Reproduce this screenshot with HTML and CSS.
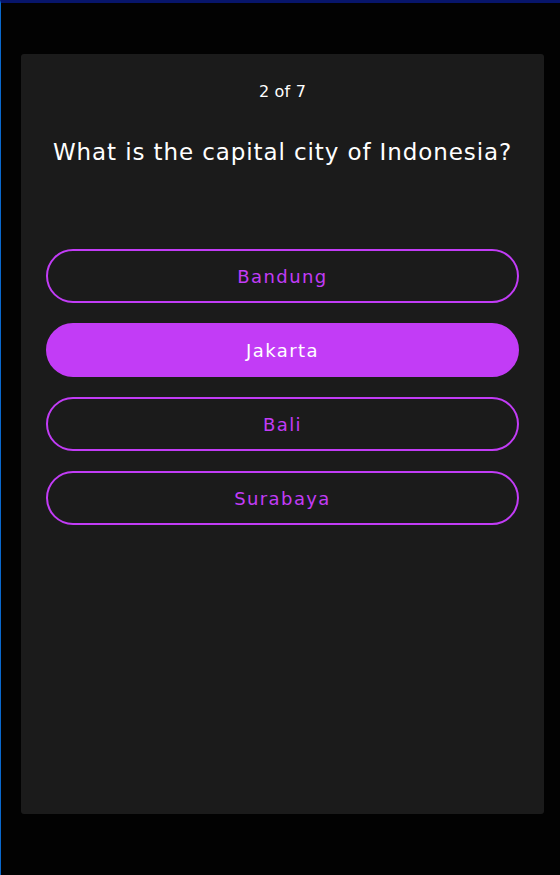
FILE: index.html
```html
<!DOCTYPE html>
<html>
<head>
<meta charset="utf-8">
<link rel="stylesheet" href="styles.css">
</head>
<body>
<div class="frame">
  <div class="card">
    <div class="counter">2 of 7</div>
    <h1 class="question">What is the capital city of Indonesia?</h1>
    <div class="answers">
      <button class="answer">Bandung</button>
      <button class="answer selected">Jakarta</button>
      <button class="answer">Bali</button>
      <button class="answer">Surabaya</button>
    </div>
  </div>
</div>
</body>
</html>
```
FILE: styles.css
```css
html, body {
  margin: 0;
  padding: 0;
  background: #020202;
  height: 100%;
}
body {
  font-family: "DejaVu Sans", "Open Sans", sans-serif;
  border-top: 3px solid #07156a;
  border-left: 1px solid #0a68cc;
  box-sizing: border-box;
}
.frame {
  padding: 51px 0 0 20px;
}
.card {
  width: 523px;
  height: 760px;
  box-sizing: border-box;
  background: #1b1b1b;
  border-radius: 3px;
  padding: 26px 25px 0 25px;
}
.counter {
  color: #ffffff;
  text-align: center;
  font-size: 16px;
  line-height: 24px;
  letter-spacing: 0.2px;
}
.question {
  color: #ffffff;
  text-align: center;
  font-weight: 400;
  font-size: 23px;
  line-height: 30px;
  letter-spacing: 0.9px;
  margin: 33px 0 0 0;
}
.answers {
  display: flex;
  flex-direction: column;
  gap: 20px;
  margin-top: 82px;
}
.answer {
  height: 54px;
  border: 2px solid #c23cf6;
  border-radius: 27px;
  background: transparent;
  color: #c23cf6;
  font-family: inherit;
  font-size: 18px;
  letter-spacing: 1.4px;
  padding: 0;
}
.answer.selected {
  background: #c23cf6;
  color: #ffffff;
}
```
